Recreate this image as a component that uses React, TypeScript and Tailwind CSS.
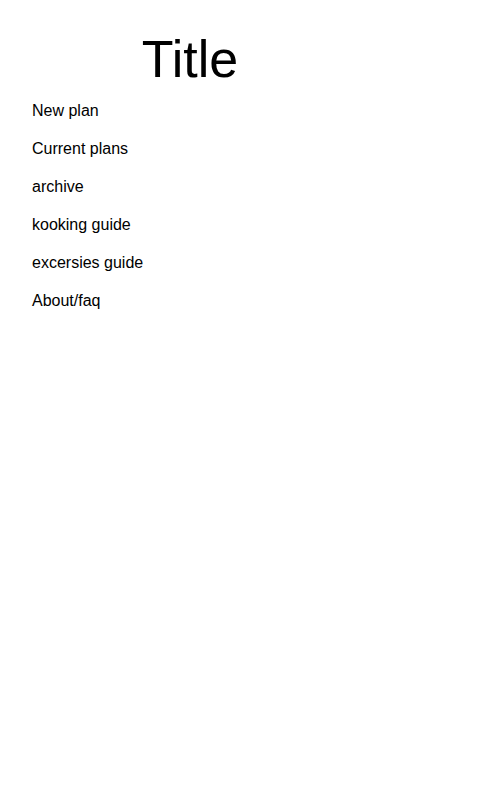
const menuItems = [
  'New plan',
  'Current plans',
  'archive',
  'kooking guide',
  'excersies guide',
  'About/faq',
];

export default function App() {
  return (
    <div className="min-h-[800px] w-[480px] bg-white text-black font-['Liberation_Sans',Arial,sans-serif]">
      <div className="w-[380px] pt-[33px] text-center">
        <h1 className="text-[52px] leading-none">Title</h1>
      </div>
      <nav className="flex flex-col px-8 pt-[7px]">
        {menuItems.map((item) => (
          <a key={item} className="py-[7px] text-base leading-6">
            {item}
          </a>
        ))}
      </nav>
    </div>
  );
}
